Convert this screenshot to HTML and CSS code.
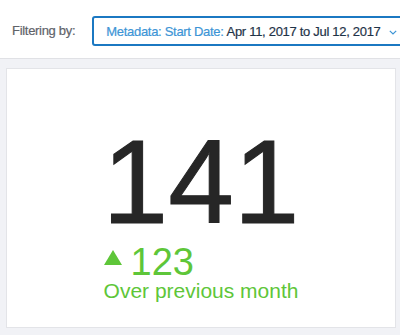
FILE: index.html
```html
<!DOCTYPE html>
<html>
<head>
<meta charset="utf-8">
<link rel="stylesheet" href="styles.css">
</head>
<body>
<div class="topbar">
  <span class="label">Filtering by:</span>
  <div class="dropdown">
    <span class="key">Metadata: Start Date:</span>
    <span class="value">Apr 11, 2017 to Jul 12, 2017</span>
    <svg class="chev" width="8" height="5" viewBox="0 0 8 5"><polyline points="0.8,0.8 4,4 7.2,0.8" fill="none" stroke="#3d95d6" stroke-width="1.2"/></svg>
  </div>
</div>
<div class="main">
  <div class="card">
    <div class="metric">
      <div class="big">141</div>
      <div class="sub">
        <div class="delta">
          <svg class="tri" width="18" height="15" viewBox="0 0 18 15"><polygon points="9,0 18,15 0,15" fill="#5ec639"/></svg>
          <span class="num">123</span>
        </div>
        <div class="caption">Over previous month</div>
      </div>
    </div>
  </div>
</div>
</body>
</html>
```
FILE: styles.css
```css
html, body {
  margin: 0;
  padding: 0;
  overflow: hidden;
  background: #f1f2f6;
  font-family: "Liberation Sans", Arial, sans-serif;
}
.topbar {
  height: 59px;
  box-sizing: border-box;
  border-bottom: 1px solid #e0e1e5;
  background: #ffffff;
  display: flex;
  align-items: flex-start;
  padding: 16px 0 0 12px;
  white-space: nowrap;
}
.label {
  font-size: 13px;
  letter-spacing: -0.3px;
  color: #5f636a;
  line-height: 30px;
  margin-right: 17px;
  flex-shrink: 0;
  -webkit-text-stroke: 0.2px #5f636a;
}
.dropdown {
  flex-shrink: 0;
  width: 320px;
  height: 30px;
  box-sizing: border-box;
  border: 2px solid #1b78c2;
  border-radius: 3px;
  display: flex;
  align-items: center;
  padding-left: 12px;
  font-size: 13px;
  letter-spacing: -0.3px;
}
.key {
  color: #3d95d6;
  margin-right: 3px;
  -webkit-text-stroke: 0.2px #3d95d6;
}
.value {
  color: #1f3348;
  -webkit-text-stroke: 0.2px #1f3348;
}
.chev {
  margin-left: 8px;
  margin-top: 2px;
}
.main {
  padding: 9px 4px 6px 6px;
}
.card {
  width: 390px;
  height: 260px;
  box-sizing: border-box;
  background: #ffffff;
  border: 1px solid #e3e4e8;
  padding-top: 54px;
  text-align: center;
}
.metric {
  display: inline-block;
  text-align: left;
}
.big {
  font-size: 118px;
  line-height: 118px;
  color: #262626;
  text-align: center;
  -webkit-text-stroke: 1px #262626;
}
.sub {
  padding-left: 1px;
  margin-top: 2px;
  color: #5ec639;
}
.delta {
  display: flex;
  align-items: flex-start;
  height: 38px;
}
.tri {
  margin-top: 7px;
  margin-right: 9px;
}
.num {
  font-size: 38px;
  line-height: 38px;
}
.caption {
  font-size: 21px;
  line-height: 21px;
  margin-top: -1px;
}
```
